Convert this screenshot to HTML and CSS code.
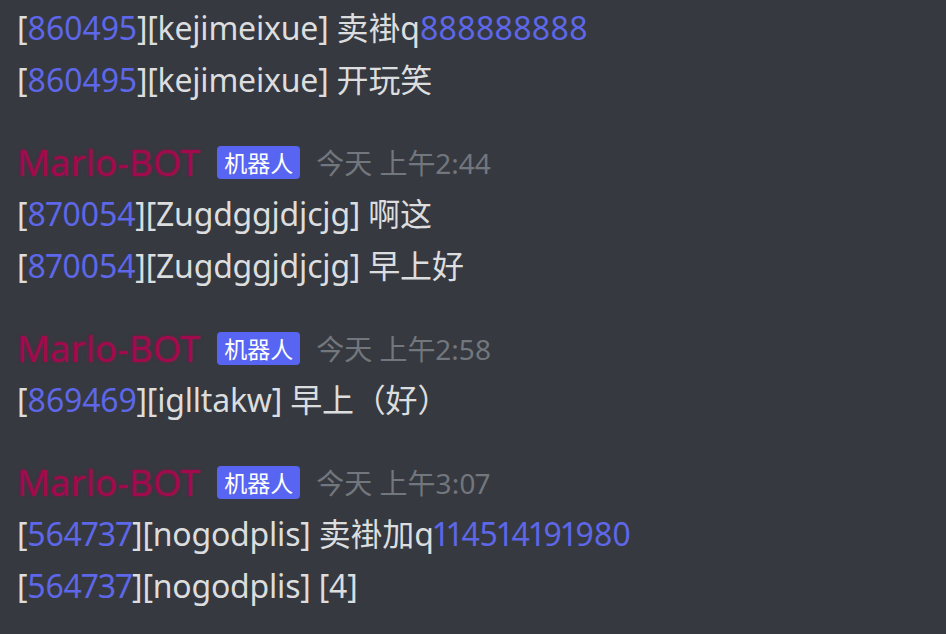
FILE: index.html
```html
<!DOCTYPE html>
<html lang="zh-CN">
<head>
    <meta charset="UTF-8">
    <meta name="viewport" content="width=device-width, initial-scale=1.0">
    <title>Chat</title>
    <link rel="stylesheet" href="styles.css">
</head>
<body>
    <div class="chat">
        <div class="group">
            <div class="line">[<span class="num">860495</span>][kejimeixue] 卖褂q<span class="num">888888888</span></div>
            <div class="line">[<span class="num">860495</span>][kejimeixue] 开玩笑</div>
        </div>

        <div class="group">
            <div class="head">
                <span class="username">Marlo-BOT</span>
                <span class="bot-tag">机器人</span>
                <span class="time">今天 上午2:44</span>
            </div>
            <div class="line">[<span class="num">870054</span>][Zugdggjdjcjg] 啊这</div>
            <div class="line">[<span class="num">870054</span>][Zugdggjdjcjg] 早上好</div>
        </div>

        <div class="group">
            <div class="head">
                <span class="username">Marlo-BOT</span>
                <span class="bot-tag">机器人</span>
                <span class="time">今天 上午2:58</span>
            </div>
            <div class="line">[<span class="num">869469</span>][iglltakw] 早上（好）</div>
        </div>

        <div class="group">
            <div class="head">
                <span class="username">Marlo-BOT</span>
                <span class="bot-tag">机器人</span>
                <span class="time">今天 上午3:07</span>
            </div>
            <div class="line">[<span class="num">564737</span>][nogodplis] 卖褂加q<span class="num">114514191980</span></div>
            <div class="line">[<span class="num">564737</span>][nogodplis] [4]</div>
        </div>
    </div>
</body>
</html>
```

FILE: styles.css
```css
body, html {
    margin: 0;
    padding: 0;
    height: 100%;
    background-color: #36393f;
    color: #dcddde;
    font-family: "Noto Sans", "Noto Sans CJK SC", sans-serif;
    font-variant-numeric: proportional-nums;
}

.chat {
    padding: 2px 17px 0;
}

.group + .group {
    margin-top: 30px;
}

.line {
    font-size: 32px;
    line-height: 52px;
    letter-spacing: -0.2px;
    white-space: nowrap;
}

.num {
    color: #5d67e8;
}

.head {
    display: flex;
    align-items: center;
    height: 52px;
}

.username {
    font-size: 36.5px;
    color: #a10a4d;
    text-shadow: 0 0 3px rgba(161, 10, 77, 0.7);
}

.bot-tag {
    margin-left: 17px;
    padding: 0 7px;
    height: 33px;
    line-height: 34px;
    font-size: 23px;
    color: #fff;
    background-color: #5865f2;
    border-radius: 4px;
}

.time {
    margin-left: 16px;
    font-size: 28px;
    color: #72767d;
}
```
